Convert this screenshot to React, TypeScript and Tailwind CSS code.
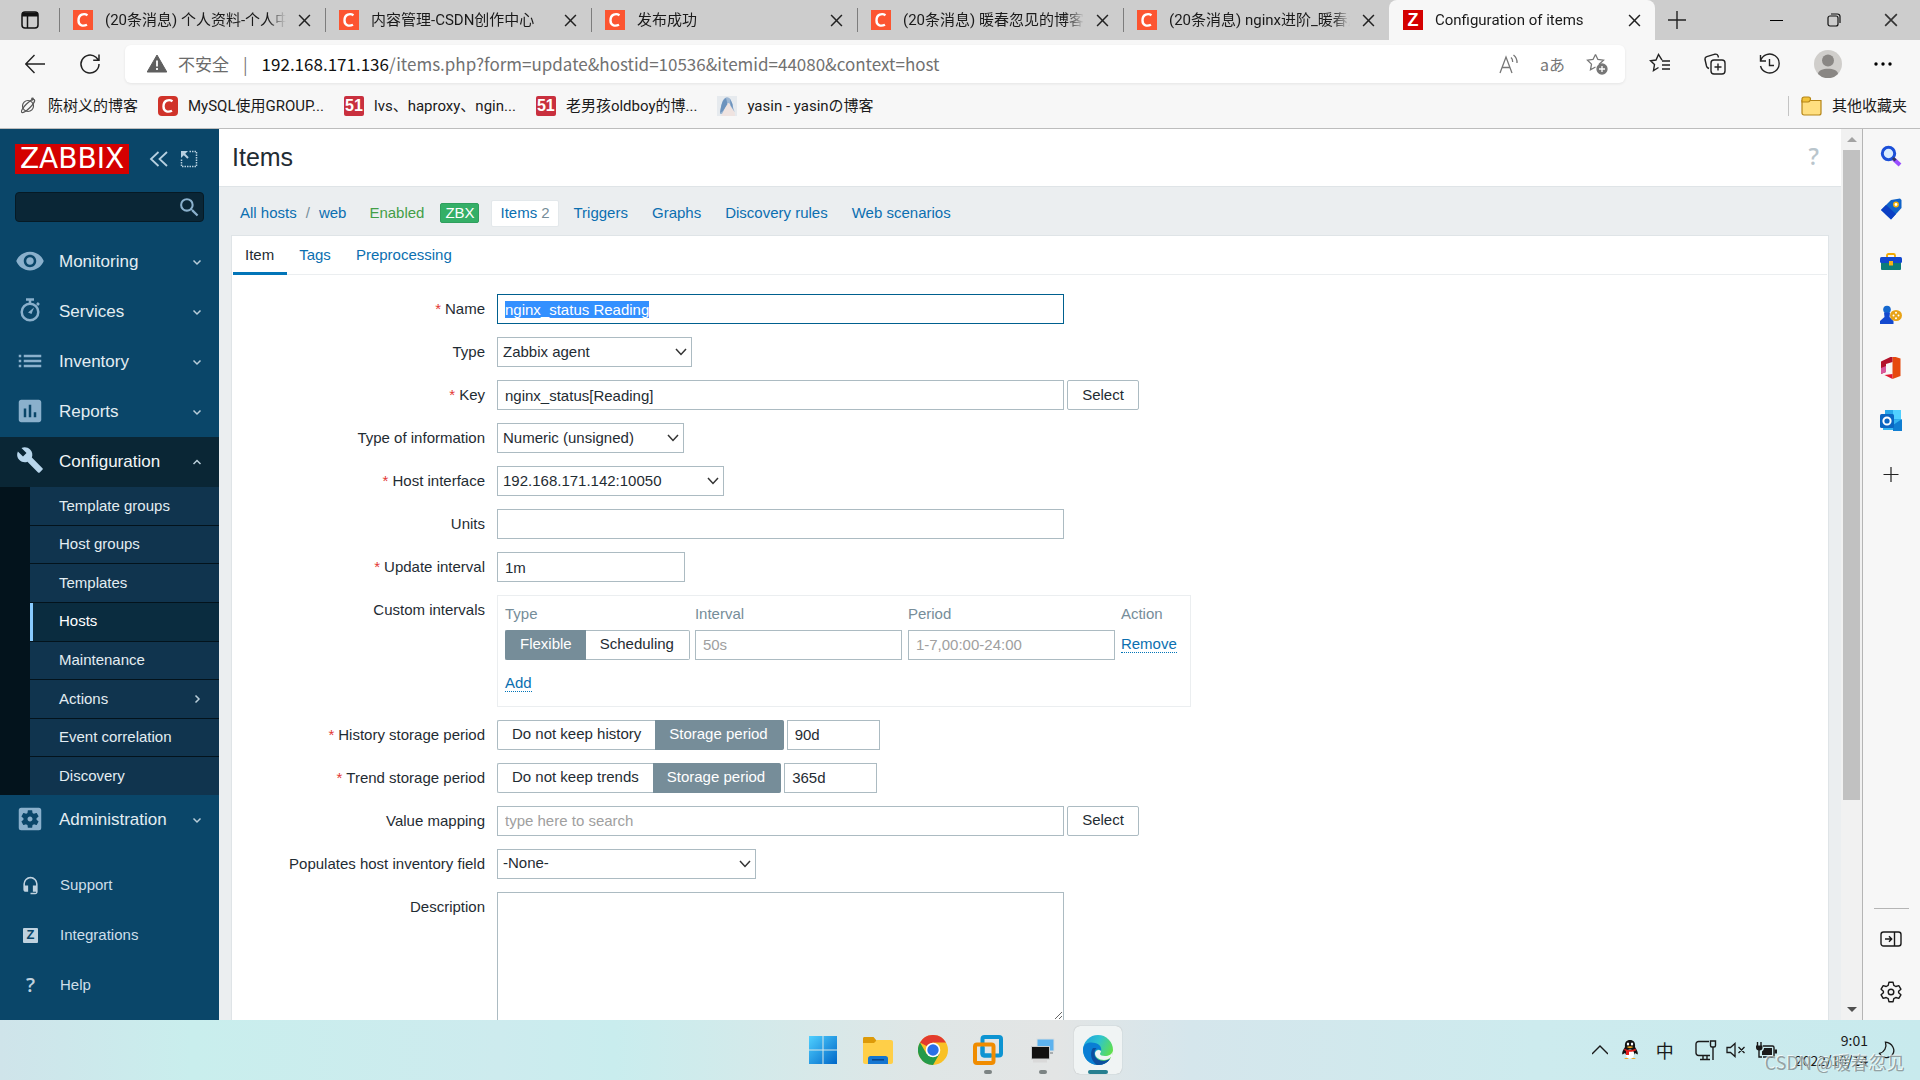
import { useEffect, useRef } from "react";
import type { ReactNode } from "react";
import {
  MdAssessment,
  MdBuild,
  MdHeadsetMic,
  MdList,
  MdSearch,
  MdSettingsApplications,
  MdVisibility,
} from "react-icons/md";

const BROWSER_TABS = [
  { title: "(20条消息) 个人资料-个人中心", active: false },
  { title: "内容管理-CSDN创作中心", active: false },
  { title: "发布成功", active: false },
  { title: "(20条消息) 暖春忽见的博客_暖春", active: false },
  { title: "(20条消息) nginx进阶_暖春忽见", active: false },
  { title: "Configuration of items", active: true },
];

const SUBMENU = [
  "Template groups",
  "Host groups",
  "Templates",
  "Hosts",
  "Maintenance",
  "Actions",
  "Event correlation",
  "Discovery",
];

const HOST_LINKS = ["Triggers", "Graphs", "Discovery rules", "Web scenarios"];

const FIELD =
  "h-[30px] border border-[#acbbc2] bg-white px-[7px] text-[15px] text-[#1f2c33] outline-none placeholder:text-[#a0a0a0]";

/* ---------- browser chrome ---------- */

function CloseIcon({ className }: { className?: string }) {
  return (
    <svg viewBox="0 0 12 12" className={className} fill="none" stroke="currentColor">
      <path d="M1 1l10 10M11 1L1 11" strokeWidth="1.4" />
    </svg>
  );
}

function CsdnIcon({ className }: { className: string }) {
  return (
    <svg viewBox="0 0 20 20" className={className}>
      <path d="M14.5 5.2C11 3 5.5 4.200 5.500 10.500c0 5.500 5 6 8.500 4.200" fill="none" stroke="#fff" strokeWidth="2.400" />
    </svg>
  );
}

function TabStrip() {
  return (
    <div className="flex h-10 shrink-0 items-stretch bg-[#cdcdcd]">
      <button aria-label="Tab actions" className="flex w-[59px] items-center pl-5">
        <svg viewBox="0 0 20 20" className="h-5 w-5" fill="none" stroke="#111" strokeWidth="1.5">
          <rect x="2" y="2" width="16" height="16" rx="3" />
          <path d="M2 4.500h16" strokeWidth="4" />
          <path d="M7.500 6v12" />
        </svg>
      </button>
      {BROWSER_TABS.map((tab) => (
        <div
          key={tab.title}
          className={
            tab.active
              ? "flex w-[266px] items-center rounded-t-lg bg-[#f7f7f7] pr-[11px] pl-[14px]"
              : "flex w-[266px] items-center pr-[11px]"
          }
        >
          {!tab.active && <span className="mr-[13px] h-6 w-px bg-[#7d7d7d]" />}
          {tab.active ? (
            <span className="flex h-5 w-5 items-center justify-center bg-[#d40000] font-['Liberation_Sans',sans-serif] text-[18px] font-bold text-white">
              Z
            </span>
          ) : (
            <CsdnIcon className="h-5 w-5 bg-[#fc5531]" />
          )}
          <span className="ml-3 flex-1 overflow-hidden font-[Roboto,'Noto_Sans_CJK_SC',sans-serif] text-[15px] leading-5 whitespace-nowrap text-[#1a1a1a] [mask-image:linear-gradient(to_right,black_90%,transparent)]">
            {tab.title}
          </span>
          <button aria-label="Close tab" className="ml-2 flex w-5 justify-center text-[#222]">
            <CloseIcon className="h-[13px] w-[13px]" />
          </button>
        </div>
      ))}
      <button aria-label="New tab" className="flex w-11 items-center justify-center">
        <svg viewBox="0 0 18 18" className="h-[18px] w-[18px]" stroke="#222" strokeWidth="1.4">
          <path d="M9 0v18M0 9h18" />
        </svg>
      </button>
      <div className="ml-auto flex">
        <button aria-label="Minimize" className="flex w-[58px] items-center justify-center">
          <span className="h-px w-[13px] bg-black" />
        </button>
        <button aria-label="Restore" className="flex w-[57px] items-center justify-center">
          <svg viewBox="0 0 14 14" className="h-[14px] w-[14px]" fill="none" stroke="#111" strokeWidth="1.2">
            <rect x="1" y="3" width="10" height="10" rx="2" />
            <path d="M4 1h6.500A2.500 2.500 0 0 1 13 3.500V10" />
          </svg>
        </button>
        <button aria-label="Close window" className="flex w-[58px] items-center justify-center text-[#333]">
          <CloseIcon className="h-[14px] w-[14px]" />
        </button>
      </div>
    </div>
  );
}

function StarPath() {
  return <path d="M9.500 1.500l2.400 5 5.600.7-4.100 3.800.3 1.500M9.500 1.500L7 6.500l-5.500.7 4 3.900-1 5.600 5-2.700" />;
}

function AddressBar() {
  return (
    <div className="flex h-[48px] shrink-0 items-center bg-[#f7f7f7]">
      <button aria-label="Back" className="flex w-[70px] items-center justify-center">
        <svg viewBox="0 0 20 20" className="h-5 w-5" fill="none" stroke="#222" strokeWidth="1.400">
          <path d="M20 10H1M9.500 1L.8 10l8.700 9" />
        </svg>
      </button>
      <button aria-label="Refresh" className="flex w-[40px] items-center justify-center">
        <svg viewBox="0 0 22 22" className="h-[22px] w-[22px]" fill="none" stroke="#222" strokeWidth="1.500">
          <path d="M20 11a9 9 0 1 1-3-6.700L19.500 7M20 1.500V7.200h-5.800" />
        </svg>
      </button>
      <div className="ml-[15px] flex h-[38px] flex-1 items-center rounded-md bg-white pr-[17px] pb-px pl-[22px] shadow-[0_1px_3px_rgba(0,0,0,0.08)]">
        <svg viewBox="0 0 20 18" className="h-[19px] w-5">
          <path d="M10 0.500L19.800 17.500H.2z" fill="#5f5f5f" stroke="#5f5f5f" strokeLinejoin="round" />
          <path d="M10 6v6M10 13.500v2" stroke="#fff" strokeWidth="1.800" />
        </svg>
        <span className="ml-[11px] text-[17px] leading-6 text-[#6b6b6b]">不安全</span>
        <span className="mx-[14px] text-[17px] leading-6 text-[#777]">|</span>
        <span className="text-[17px] leading-6 whitespace-nowrap text-[#717171]">
          <span className="text-[#111]">192.168.171.136</span>
          /items.php?form=update&amp;hostid=10536&amp;itemid=44080&amp;context=host
        </span>
        <div className="ml-auto flex items-center gap-[21px] text-[#767676]">
          <button aria-label="Read aloud">
            <svg viewBox="0 0 20 20" className="h-5 w-5" fill="none" stroke="currentColor" strokeWidth="1.300">
              <path d="M1 19L7 3l6 16M3.200 13.500h7.600M12 3.500c1.200 1 1.700 2.500 1.700 4.500M14.500 1c2.500 2 3.700 4.800 3.500 8" />
            </svg>
          </button>
          <button aria-label="Translate" className="text-[16px] leading-5">
            aあ
          </button>
          <button aria-label="Add to favorites">
            <svg viewBox="0 0 22 22" className="h-[22px] w-[22px]" fill="none" stroke="currentColor" strokeWidth="1.300">
              <StarPath />
              <circle cx="16" cy="16" r="5" fill="currentColor" />
              <path d="M16 13v6M13 16h6" stroke="#fff" />
            </svg>
          </button>
        </div>
      </div>
      <div className="flex items-center pr-[5px] text-[#222]">
        <button aria-label="Favorites" className="flex w-[70px] justify-center">
          <svg viewBox="0 0 22 22" className="h-[22px] w-[22px]" fill="none" stroke="currentColor" strokeWidth="1.400">
            <path d="M13 7.200L9.500 1.500 7 7l-5.500.7 4 3.900-1 5.900 5-3M13 8h8M13 12h8M13 16h8" />
          </svg>
        </button>
        <button aria-label="Collections" className="flex w-[40px] justify-center">
          <svg viewBox="0 0 22 22" className="h-[22px] w-[22px]" fill="none" stroke="currentColor" strokeWidth="1.400">
            <path d="M5 15.500l-1-.5C3 14.500 2.800 14 2.500 13L1 6.500C.8 5 1.500 4 2.800 3.600L11 1.200c1.500-.3 2.500.2 3 1.600l.5 1.700" />
            <rect x="7" y="7" width="14" height="14" rx="3" />
            <path d="M14 10.500v7M10.500 14h7" />
          </svg>
        </button>
        <button aria-label="History" className="flex w-[69px] justify-center">
          <svg viewBox="0 0 22 22" className="h-[22px] w-[22px]" fill="none" stroke="currentColor" strokeWidth="1.400">
            <path d="M1.500 8A9.500 9.500 0 1 1 1.500 13M1.500 2v6H7M10.500 6v6.500H15" />
          </svg>
        </button>
        <button aria-label="Profile" className="flex w-[47px] justify-center">
          <svg viewBox="0 0 28 28" className="h-7 w-7">
            <circle cx="14" cy="14" r="14" fill="#d0cecb" />
            <circle cx="14" cy="10.500" r="6" fill="#8a8784" />
            <path d="M4 24c0-7 20-7 20 0a14 14 0 0 1-20 0z" fill="#8a8784" />
          </svg>
        </button>
        <button aria-label="Settings and more" className="flex w-[64px] justify-center">
          <svg viewBox="0 0 18 4" className="h-1 w-[18px]">
            <circle cx="2" cy="2" r="1.700" />
            <circle cx="9" cy="2" r="1.700" />
            <circle cx="16" cy="2" r="1.700" />
          </svg>
        </button>
      </div>
    </div>
  );
}

function Bookmark({ icon, label, href = "#" }: { icon: ReactNode; label: string; href?: string }) {
  return (
    <a
      href={href}
      className="flex items-center gap-[10px] font-[Roboto,'Noto_Sans_CJK_SC',sans-serif] text-[15px] leading-5 whitespace-nowrap text-[#1a1a1a]"
    >
      {icon}
      {label}
    </a>
  );
}

function Icon51() {
  return (
    <span className="flex h-5 w-5 items-center justify-center rounded-xs bg-[#c9303e] font-['Liberation_Sans',sans-serif] text-[16px] font-bold text-white">
      51
    </span>
  );
}

function BookmarksBar() {
  return (
    <div className="flex h-[40px] shrink-0 items-center bg-[#f7f7f7] pr-[13px] pb-1 pl-[18px]">
      <div className="flex items-center gap-5">
        <Bookmark
          label="陈树义的博客"
          icon={
            <svg viewBox="0 0 20 20" className="h-5 w-5" fill="none" stroke="#555" strokeWidth="1.200">
              <circle cx="10" cy="10" r="5.500" />
              <ellipse cx="10" cy="10" rx="9" ry="2.500" transform="rotate(-45 10 10)" />
              <circle cx="14.500" cy="3" r=".8" />
            </svg>
          }
        />
        <Bookmark label="MySQL使用GROUP..." icon={<CsdnIcon className="h-5 w-5 rounded-sm bg-[#d0332a]" />} />
        <Bookmark label="lvs、haproxy、ngin..." icon={<Icon51 />} />
        <Bookmark label="老男孩oldboy的博..." icon={<Icon51 />} />
        <Bookmark
          label="yasin - yasinの博客"
          icon={
            <svg viewBox="0 0 20 20" className="h-5 w-5">
              <rect width="20" height="20" fill="#e6eaee" />
              <path d="M3 18C4 10 5 3 9 1.500c4-1 6 4 6.500 8l2 6-3 2z" fill="#9db7d3" />
              <path d="M10 7c2-.5 3.500.5 3.500 3l4 6 .5 4H4l2-4z" fill="#efe3e0" />
              <path d="M9 2l1.500 6L6 15l-3 2C4 10 5 4 9 2z" fill="#6d93bd" />
              <path d="M13 3l2.500 5 .5 5-2.500-4z" fill="#6d93bd" />
            </svg>
          }
        />
      </div>
      <div className="ml-auto flex items-center gap-3">
        <span className="h-5 w-px bg-[#c4c4c4]" />
        <Bookmark
          label="其他收藏夹"
          icon={
            <svg viewBox="0 0 21 20" className="h-5 w-[21px]" stroke="#b58517" strokeWidth="1.200">
              <path d="M1 4.500h19V17a2 2 0 0 1-2 2H3a2 2 0 0 1-2-2z" fill="#ffdf80" />
              <path d="M1 6V3a2 2 0 0 1 2-2h4.500c1.500 0 2 1 2 2S8.500 6 7 6z" fill="#f2c33a" />
            </svg>
          }
        />
      </div>
    </div>
  );
}

/* ---------- Zabbix sidebar ---------- */

function Chevron({ className, up }: { className?: string; up?: boolean }) {
  return (
    <svg viewBox="0 0 10 10" className={className} fill="none" stroke="currentColor" strokeWidth="1.500">
      <path d={up ? "M1.500 7L5 3.500 8.500 7" : "M1.500 3.500L5 7l3.500-3.500"} />
    </svg>
  );
}

function StopwatchIcon({ className }: { className?: string }) {
  return (
    <svg viewBox="0 0 30 30" className={className} fill="none" stroke="currentColor" strokeWidth="2.500">
      <circle cx="15" cy="16" r="8.300" />
      <path d="M11 3.500h8M15 4v4M22 7l2 2" />
      <path d="M19 11.500l-2.500 6.500-3.500-1.500z" fill="currentColor" stroke="none" />
    </svg>
  );
}

const MENU = [
  { label: "Monitoring", Icon: MdVisibility },
  { label: "Services", Icon: StopwatchIcon },
  { label: "Inventory", Icon: MdList },
  { label: "Reports", Icon: MdAssessment },
];

type MenuItemProps = {
  label: string;
  Icon: (props: { className?: string }) => ReactNode;
  open?: boolean;
};

function MenuItem({ label, Icon, open }: MenuItemProps) {
  return (
    <a
      href="#"
      className={
        open
          ? "flex h-[50px] items-center bg-[#0a2635] pr-[17px] pl-[15px] text-[#f2f6f8]"
          : "flex h-[50px] items-center pr-[17px] pl-[15px] text-[#e3edf2]"
      }
    >
      <Icon className={open ? "mb-1 h-[28px] w-[30px] text-[#b8d6ec]" : "mb-[2px] h-[30px] w-[30px] text-[#8ab0cc]"} />
      <span className="ml-[14px] flex-1 text-[17px]">{label}</span>
      <Chevron up={open} className="h-[10px] w-[10px] text-[#b9cdd9]" />
    </a>
  );
}

function Sidebar() {
  return (
    <aside className="flex w-[219px] shrink-0 flex-col overflow-hidden bg-[#0a4669]">
      <div className="flex items-center pt-[15px] pl-[15px]">
        <a
          href="#"
          className="flex h-[30px] w-[114px] items-center justify-center bg-[#d40000] font-['DejaVu_Sans',sans-serif] text-[28px] leading-[30px] text-white"
        >
          ZABBIX
        </a>
        <button aria-label="Hide sidebar" className="ml-5 text-[#b7d0e0]">
          <svg viewBox="0 0 20 16" className="h-4 w-5" fill="none" stroke="currentColor" strokeWidth="1.800">
            <path d="M9.500 1L2 8l7.500 7M18 1l-7.500 7 7.500 7" />
          </svg>
        </button>
        <button aria-label="Kiosk mode" className="ml-[11px] text-[#b7d0e0]">
          <svg viewBox="0 0 18 18" className="h-[18px] w-[18px]" fill="none" stroke="currentColor">
            <path d="M9.500 1.500h7v15h-15V9" strokeWidth="1.500" strokeDasharray="1.500 1" />
            <path d="M1 1h7L1 8z" fill="currentColor" stroke="none" />
            <path d="M3 3l5 5" strokeWidth="2" />
          </svg>
        </button>
      </div>
      <div className="mx-[15px] mt-[18px] flex h-[30px] items-center rounded-sm border border-[#061a25] bg-[#0a2636] pr-px">
        <input type="search" aria-label="Search" className="h-full min-w-0 flex-1 bg-transparent px-2 text-[15px] text-white outline-none" />
        <button aria-label="Submit search" className="text-[#8ab0cc]">
          <MdSearch className="h-[25px] w-[25px]" />
        </button>
      </div>
      <nav className="mt-[15px]">
        {MENU.map((item) => (
          <MenuItem key={item.label} label={item.label} Icon={item.Icon} />
        ))}
        <MenuItem label="Configuration" Icon={MdBuild} open />
        <ul className="grid h-[308px] grid-rows-8 gap-px bg-[#03131c] pl-[30px]">
          {SUBMENU.map((label) => (
            <li key={label} className="flex">
              <a
                href="#"
                className={
                  label === "Hosts"
                    ? "flex flex-1 items-center border-l-[3px] border-[#88cbff] bg-[#0a2c3f] pr-[17px] pl-[26px] text-[15px] text-white"
                    : "flex flex-1 items-center bg-[#10344e] pr-[17px] pl-[29px] text-[15px] text-[#e3edf2]"
                }
              >
                {label}
                {label === "Actions" && (
                  <svg viewBox="0 0 10 10" className="ml-auto h-[10px] w-[10px]" fill="none" stroke="#b9cdd9" strokeWidth="1.500">
                    <path d="M3.500 1.500L7 5 3.500 8.500" />
                  </svg>
                )}
              </a>
            </li>
          ))}
        </ul>
        <MenuItem label="Administration" Icon={MdSettingsApplications} />
      </nav>
      <nav className="mt-[15px] text-[15px] text-[#cfdfe9]">
        <a href="#" className="flex h-[50px] items-center pl-[21px]">
          <MdHeadsetMic className="h-[19px] w-[19px] text-[#c0d2df]" />
          <span className="ml-5">Support</span>
        </a>
        <a href="#" className="flex h-[50px] items-center pl-[23px]">
          <span className="flex h-[15px] w-[15px] items-center justify-center rounded-[1px] bg-[#c0d2df] text-[13px] font-bold text-[#0a4669]">
            Z
          </span>
          <span className="ml-[22px]">Integrations</span>
        </a>
        <a href="#" className="flex h-[50px] items-center pl-[23px]">
          <span className="w-[15px] text-center font-['Open_Sans',sans-serif] text-[20px] font-semibold text-[#c0d2df]">?</span>
          <span className="ml-[22px]">Help</span>
        </a>
      </nav>
    </aside>
  );
}

/* ---------- item form ---------- */

function Row({ label, htmlFor, required, children }: { label: string; htmlFor?: string; required?: boolean; children: ReactNode }) {
  return (
    <div className="flex items-start gap-3">
      <label htmlFor={htmlFor} className="w-[253px] shrink-0 text-right leading-[30px] text-[#1f2c33]">
        {required && <span className="mr-1 text-[#e33734]">*</span>}
        {label}
      </label>
      <div className="flex items-start gap-[3px]">{children}</div>
    </div>
  );
}

function Select({ id, value, width }: { id: string; value: string; width: string }) {
  return (
    <div className={`grid items-center ${width}`}>
      <select
        id={id}
        defaultValue={value}
        className="col-start-1 row-start-1 h-[30px] appearance-none border border-[#acbbc2] bg-white pl-[5px] text-[15px] text-[#1f2c33] outline-none"
      >
        <option>{value}</option>
      </select>
      <svg
        viewBox="0 0 12 8"
        className="pointer-events-none col-start-1 row-start-1 mr-[5px] h-2 w-3 justify-self-end"
        fill="none"
        stroke="#333"
        strokeWidth="1.500"
      >
        <path d="M1 1l5 5.500L11 1" />
      </svg>
    </div>
  );
}

function Segmented({ name, options, selected }: { name: string; options: string[]; selected: string }) {
  return (
    <fieldset className="flex">
      {options.map((option) => (
        <label key={option} className="group relative flex">
          <input type="radio" name={name} defaultChecked={option === selected} className="peer sr-only" />
          <span className="flex h-[30px] items-center border-y border-[#acbbc2] px-[14px] text-[#1f2c33] group-first:rounded-l-xs group-first:border-l group-last:rounded-r-xs group-last:border-r group-last:pr-[15px] peer-checked:border-[#768d99] peer-checked:bg-[#768d99] peer-checked:text-white">
            {option}
          </span>
        </label>
      ))}
    </fieldset>
  );
}

function SelectButton() {
  return (
    <button type="button" className="h-[30px] w-[72px] rounded-xs border border-[#acbbc2] bg-white text-[#1f2c33]">
      Select
    </button>
  );
}

function DottedLink({ children }: { children: ReactNode }) {
  return (
    <a href="#" className="border-b border-dotted border-[#0275b8] leading-4 text-[#0b6fb0]">
      {children}
    </a>
  );
}

function ItemForm() {
  const nameRef = useRef<HTMLInputElement>(null);

  useEffect(() => {
    nameRef.current?.focus();
    nameRef.current?.select();
  }, []);

  return (
    <form className="flex flex-col gap-[13px] pt-[19px]" onSubmit={(e) => e.preventDefault()}>
      <Row label="Name" htmlFor="name" required>
        <input
          id="name"
          ref={nameRef}
          defaultValue="nginx_status Reading"
          className="h-[30px] w-[567px] border border-[#00608f] bg-white px-[7px] text-[15px] text-[#1f2c33] outline-none selection:bg-[#3390ff] selection:text-white"
        />
      </Row>
      <Row label="Type" htmlFor="type">
        <Select id="type" value="Zabbix agent" width="w-[195px]" />
      </Row>
      <Row label="Key" htmlFor="key" required>
        <input id="key" defaultValue="nginx_status[Reading]" className={`${FIELD} w-[567px]`} />
        <SelectButton />
      </Row>
      <Row label="Type of information" htmlFor="value_type">
        <Select id="value_type" value="Numeric (unsigned)" width="w-[187px]" />
      </Row>
      <Row label="Host interface" htmlFor="interface" required>
        <Select id="interface" value="192.168.171.142:10050" width="w-[227px]" />
      </Row>
      <Row label="Units" htmlFor="units">
        <input id="units" className={`${FIELD} w-[567px]`} />
      </Row>
      <Row label="Update interval" htmlFor="delay" required>
        <input id="delay" defaultValue="1m" className={`${FIELD} w-[188px]`} />
      </Row>
      <Row label="Custom intervals">
        <div className="border border-[#ebeef0] px-[7px] pt-[7px] pb-3">
          <table className="border-collapse text-left">
            <thead>
              <tr className="h-[22px] text-[#768d99]">
                <th className="font-normal">Type</th>
                <th className="font-normal">Interval</th>
                <th className="font-normal">Period</th>
                <th className="font-normal">Action</th>
              </tr>
            </thead>
            <tbody>
              <tr className="h-[38px]">
                <td className="pr-[5px]">
                  <Segmented name="delay_flex" options={["Flexible", "Scheduling"]} selected="Flexible" />
                </td>
                <td className="pr-[6px]">
                  <input aria-label="Interval" placeholder="50s" className={`${FIELD} block w-[207px]`} />
                </td>
                <td className="pr-[6px]">
                  <input aria-label="Period" placeholder="1-7,00:00-24:00" className={`${FIELD} block w-[207px]`} />
                </td>
                <td className="pr-[6px]">
                  <DottedLink>Remove</DottedLink>
                </td>
              </tr>
              <tr>
                <td colSpan={4} className="pt-2 leading-[22px]">
                  <DottedLink>Add</DottedLink>
                </td>
              </tr>
            </tbody>
          </table>
        </div>
      </Row>
      <Row label="History storage period" htmlFor="history" required>
        <Segmented name="history_mode" options={["Do not keep history", "Storage period"]} selected="Storage period" />
        <input id="history" defaultValue="90d" className={`${FIELD} w-[93px]`} />
      </Row>
      <Row label="Trend storage period" htmlFor="trends" required>
        <Segmented name="trends_mode" options={["Do not keep trends", "Storage period"]} selected="Storage period" />
        <input id="trends" defaultValue="365d" className={`${FIELD} w-[93px]`} />
      </Row>
      <Row label="Value mapping" htmlFor="valuemap">
        <input id="valuemap" placeholder="type here to search" className={`${FIELD} w-[567px]`} />
        <SelectButton />
      </Row>
      <Row label="Populates host inventory field" htmlFor="inventory">
        <Select id="inventory" value="-None-" width="w-[259px]" />
      </Row>
      <Row label="Description" htmlFor="description">
        <textarea id="description" className="h-[129px] w-[567px] resize border border-[#acbbc2] bg-white outline-none" />
      </Row>
    </form>
  );
}

function Content() {
  return (
    <main className="flex min-w-0 flex-1 flex-col overflow-hidden bg-[#ebeef0] text-[15px]">
      <header className="flex h-[58px] shrink-0 items-center justify-between border-b border-[#dfe4e7] bg-white pr-[22px] pl-[13px]">
        <h1 className="pt-px text-[25px] text-[#1f2c33]">Items</h1>
        <a href="#" aria-label="Help" className="pb-[2px] font-['Open_Sans',sans-serif] text-[23px] font-semibold text-[#b9c5cc]">
          ?
        </a>
      </header>
      <nav className="flex h-[48px] shrink-0 items-center pt-1 pl-[21px] text-[#0b6fb0]">
        <a href="#">All hosts</a>
        <span className="mx-[9px] text-[#768d99]">/</span>
        <a href="#">web</a>
        <span className="ml-[23px] text-[#429e47]">Enabled</span>
        <span className="ml-4 flex h-5 w-[39px] items-center justify-center rounded-xs border border-[#2f9f5e] bg-[#34af67] text-white">
          ZBX
        </span>
        <a href="#" className="mr-[15px] ml-3 flex h-[27px] items-center rounded-xs border border-[#e3e8eb] bg-white px-2">
          Items <span className="ml-1 text-[#768d99]">2</span>
        </a>
        <div className="flex gap-6">
          {HOST_LINKS.map((link) => (
            <a key={link} href="#">
              {link}
            </a>
          ))}
        </div>
      </nav>
      <section className="mr-3 ml-3 flex-1 overflow-hidden border border-b-0 border-[#dfe4e7] bg-white">
        <div role="tablist" className="mx-px flex h-[39px] border-b border-[#ebeef0]">
          <button role="tab" aria-selected="true" className="-mb-px border-b-[3px] border-[#0275b8] pt-[2px] pr-[13px] pl-3 text-[#1f2c33]">
            Item
          </button>
          <button role="tab" aria-selected="false" className="pr-[13px] pl-3 text-[#0b6fb0]">
            Tags
          </button>
          <button role="tab" aria-selected="false" className="pr-[13px] pl-3 text-[#0b6fb0]">
            Preprocessing
          </button>
        </div>
        <ItemForm />
      </section>
    </main>
  );
}

function ScrollBar() {
  return (
    <div className="flex w-[21px] shrink-0 flex-col items-center bg-[#f1f1f1]">
      <svg viewBox="0 0 10 5" className="my-2 h-[5px] w-[10px] shrink-0">
        <path d="M0 5l5-5 5 5z" fill="#a3a3a3" />
      </svg>
      <div className="h-[73%] w-[17px] bg-[#c1c1c1]" />
      <svg viewBox="0 0 10 5" className="mt-auto mb-2 h-[5px] w-[10px] shrink-0">
        <path d="M0 0l5 5 5-5z" fill="#505050" />
      </svg>
    </div>
  );
}

/* ---------- Edge side rail ---------- */

function RailButton({ label, children }: { label: string; children: ReactNode }) {
  return (
    <button aria-label={label} className="flex h-[53px] w-full items-center justify-center pr-[2px]">
      <svg viewBox="0 0 22 22" className="h-[22px] w-[22px]" fill="none">
        {children}
      </svg>
    </button>
  );
}

function EdgeRail() {
  return (
    <aside className="flex w-[58px] shrink-0 flex-col items-center border-l border-[#b5b5b5] bg-[#f7f7f7] pb-[2px]">
      <RailButton label="Search">
        <path d="M13.500 14l6.500 6" stroke="#9a4dff" strokeWidth="4" />
        <circle cx="8.500" cy="8.500" r="6.200" stroke="#1b4fd8" strokeWidth="3" fill="#d9ecff" />
        <path d="M13 13l2.500 2.500" stroke="#333a60" strokeWidth="3" />
      </RailButton>
      <RailButton label="Shopping">
        <path d="M1 12L11 2l9-1.500L21.500 2v8L11 21.500z" fill="#1063c8" />
        <path d="M1 12l5-5 10 9-5 5.500z" fill="#0b3fc4" />
        <circle cx="16" cy="6.500" r="2.200" fill="#fff" stroke="#f5b400" strokeWidth="1.500" />
      </RailButton>
      <RailButton label="Tools">
        <path d="M7 6V4.500C7 3.500 7.500 3 8.500 3h5c1 0 1.500.5 1.500 1.500V6" stroke="#f2a900" strokeWidth="1.800" />
        <rect x="1" y="9" width="20" height="10" rx="1" fill="#0d7c79" />
        <rect x="0" y="6" width="22" height="6" rx="1.500" fill="#1247cf" />
        <rect x="9" y="10" width="4" height="4.500" fill="#f6b21a" />
      </RailButton>
      <RailButton label="Games">
        <circle cx="7" cy="5.500" r="3.800" fill="#1468cf" />
        <path d="M4 8.500h6L9.500 13l4 4v3H0v-3l4.500-4z" fill="#1349cf" />
        <ellipse cx="16" cy="11.500" rx="6" ry="5.500" fill="#e8a317" />
        <g fill="#fff">
          <circle cx="16" cy="8.800" r="1" />
          <circle cx="13.500" cy="11.500" r="1" />
          <circle cx="18.500" cy="11.500" r="1" />
          <circle cx="16" cy="14.200" r="1" />
        </g>
      </RailButton>
      <RailButton label="Office">
        <path d="M12.500-1L20.500 1.500v17.500L12.500 22z" fill="#e64a0e" />
        <path d="M12.500-1v6L6 7v8l-5 2V4.500z" fill="#b3122b" />
        <path d="M1 11l5-2v6l-5 2z" fill="#d9579b" />
        <path d="M4.500 18L12.500 17v5z" fill="#e0162f" />
      </RailButton>
      <RailButton label="Outlook">
        <rect x="5" y="0" width="16" height="19" fill="#28a8ea" />
        <path d="M13 0h8v9h-8z" fill="#50d0ff" />
        <path d="M3 20V12l18-3v11z" fill="#35b5f0" />
        <path d="M13 15l9-6v12H13z" fill="#0f7ed2" />
        <rect x="0" y="4" width="14" height="14" rx="1.500" fill="#0a66c2" />
        <circle cx="7" cy="11" r="3.600" stroke="#fff" strokeWidth="2" />
      </RailButton>
      <RailButton label="Customize">
        <path d="M11 4v15M3.500 11.500h15" stroke="#222" strokeWidth="1.200" />
      </RailButton>
      <span className="mt-auto mb-[3px] h-px w-[35px] bg-[#b5b5b5]" />
      <RailButton label="Hide sidebar">
        <g stroke="#1a1a1a" strokeWidth="1.400">
          <rect x="1" y="4" width="20" height="14" rx="2.500" />
          <path d="M14.500 4v14M5 11h6.500M9 8.300l2.700 2.700L9 13.700" />
        </g>
      </RailButton>
      <RailButton label="Settings">
        <g stroke="#1a1a1a" strokeWidth="1.400" strokeLinejoin="round">
          <path d="M8.900 1.300h4.200l.7 3 2 1.200 3-.9 2.100 3.600-2.300 2.100v1.400l2.300 2.100-2.100 3.600-3-.9-2 1.200-.7 3H8.900l-.7-3-2-1.200-3 .9-2.100-3.600 2.300-2.100v-1.400L1.100 8.200l2.100-3.600 3 .9 2-1.200z" />
          <circle cx="11" cy="11" r="2.800" />
        </g>
      </RailButton>
    </aside>
  );
}

/* ---------- taskbar ---------- */

function TaskIcon({ label, running, children }: { label: string; running?: boolean; children: ReactNode }) {
  return (
    <button aria-label={label} className="flex w-[55px] flex-col items-center pt-[15px]">
      <svg viewBox="0 0 30 30" className="h-[30px] w-[30px]" fill="none">
        {children}
      </svg>
      {running && <span className="mt-[5px] h-1 w-2 rounded-full bg-[#7c8484]" />}
    </button>
  );
}

function Taskbar() {
  return (
    <footer className="relative grid h-[60px] shrink-0 grid-cols-[1fr_auto_1fr] bg-[linear-gradient(90deg,#cfe4ea_0%,#c9eeed_10%,#cdebee_26%,#c9edee_32%,#dfe6e6_48%,#e3e5e5_55%,#d5e6ec_62%,#cdebee_80%,#c8eaed_100%)]">
      <div className="col-start-2 flex">
        <TaskIcon label="Start">
          <defs>
            <linearGradient id="win" x1="0" y1="0" x2="1" y2="1">
              <stop offset="0" stopColor="#4fd0ff" />
              <stop offset="1" stopColor="#0067c8" />
            </linearGradient>
          </defs>
          <path d="M1 1h13.500v13.500H1zM15.500 1H29v13.500H15.500zM1 15.500h13.500V29H1zM15.500 15.500H29V29H15.500z" fill="url(#win)" />
        </TaskIcon>
        <TaskIcon label="File Explorer">
          <path d="M0 3.500C0 2.500.5 2 1.500 2h9l3 3.500V9H0z" fill="#dd9a09" />
          <path d="M0 8h11l3-3h14c1 0 2 .7 2 2v20c0 1-1 2-2 2H2c-1 0-2-1-2-2z" fill="#ffcf48" />
          <path d="M5 29v-5.500c0-1.500 1-2.500 2.500-2.500h15c1.500 0 2.500 1 2.500 2.500V29z" fill="#1576d1" />
          <path d="M9 24.800h12" stroke="#0a4488" strokeWidth="1.500" />
        </TaskIcon>
        <TaskIcon label="Chrome">
          <circle cx="15" cy="15" r="15" fill="#f9c126" />
          <path d="M2 7.500A15 15 0 0 1 28 7.500H15L8.500 11z" fill="#e33b2e" />
          <path d="M2 7.500A15 15 0 0 0 15 30l6.500-11.200L8.500 18.800z" fill="#249a4a" />
          <circle cx="15" cy="15" r="7.300" fill="#fff" />
          <circle cx="15" cy="15" r="5.700" fill="#2a6fe8" />
        </TaskIcon>
        <TaskIcon label="VMware" running>
          <rect x="9.500" y="2" width="18.500" height="18.500" rx="2" stroke="#0d94d2" strokeWidth="4" />
          <rect x="2" y="9.500" width="18.500" height="18.500" rx="2" stroke="#f08c00" strokeWidth="4" />
          <path d="M9.500 12v6.500c0 1.200.8 2 2 2H18" stroke="#0d94d2" strokeWidth="4" />
        </TaskIcon>
        <TaskIcon label="Xshell" running>
          <rect x="9" y="4" width="17" height="12" fill="#5db2ee" stroke="#d8dde0" />
          <path d="M14 18h11" stroke="#a8adb0" strokeWidth="2" />
          <rect x="3.500" y="11.500" width="18" height="12.500" fill="#111" stroke="#c8cccf" />
          <path d="M5 26h14" stroke="#d9d9d9" strokeWidth="3" />
        </TaskIcon>
        <div className="flex w-[55px] justify-center py-[6px]">
          <button aria-label="Microsoft Edge" className="flex w-[48px] flex-col items-center rounded-md bg-[#f0f4f4] pt-[9px] shadow-[0_0_1px_rgba(0,0,0,0.3)]">
            <svg viewBox="0 0 30 30" className="h-[30px] w-[30px]">
              <defs>
                <linearGradient id="edgeTop" x1="0" y1="0" x2="1" y2="0.500">
                  <stop offset="0" stopColor="#1b9fe0" />
                  <stop offset="0.500" stopColor="#2ec4cf" />
                  <stop offset="1" stopColor="#62e04a" />
                </linearGradient>
              </defs>
              <circle cx="15" cy="15" r="15" fill="url(#edgeTop)" />
              <path d="M0 14C1 7 8 7 12 8c5 1 7 5 6 8-3-4-8 0-6 6 2 5 9 6 15 2-3 4-7 6-12 6C6 30 0 23 0 14z" fill="#0a7ed4" />
              <path d="M10 13c-3 4-3 12 4 17 6 .3 10-2 13-6-6 3-12 2-14.500-2-2-3-1-7 1-9z" fill="#0d4f9e" />
              <path d="M18 16c-2-2-5-1-6 2 0 4 4 7 9 7 3 0 6-1.500 7-3l1 3 1-9c-1 3-4 5-8 5-3 0-5-1-5-2 0-1 1-1.500 1-3z" fill="#f0f4f4" />
            </svg>
            <span className="mt-[5px] h-1 w-5 rounded-full bg-[#267f90]" />
          </button>
        </div>
      </div>
      <div className="flex items-center justify-end pr-[24px] text-[#1a1a1a]">
        <svg viewBox="0 0 16 10" className="h-[10px] w-4" fill="none" stroke="currentColor" strokeWidth="1.400">
          <path d="M0 9l8-8 8 8" />
        </svg>
        <svg viewBox="0 0 16 20" className="ml-[14px] h-5 w-4">
          <path d="M8 0C4 0 2.500 3 3 7c-2 3-3.500 6-2.500 7.500L3 13c.5 4 9.500 4 10 0l2.500 1.500C16.500 13 15 10 13 7c.5-4-1-7-5-7z" fill="#111" />
          <ellipse cx="8" cy="14" rx="4.200" ry="4.500" fill="#fff" />
          <path d="M2.500 8.500c3 2 8 2 11 0l.5 2c-2 1-5 1.500-7 1.300V15H4v-4l-1.800-1z" fill="#e21d1d" />
          <ellipse cx="6" cy="4" rx="1.200" ry="1.600" fill="#fff" />
          <ellipse cx="10" cy="4" rx="1.200" ry="1.600" fill="#fff" />
          <path d="M4.500 7c2 1.500 5 1.500 7 0-2-1-5-1-7 0zM2 19c1-1.500 4-1.500 5 0zM9 19c1-1.500 4-1.500 5 0z" fill="#f3a51c" />
        </svg>
        <span className="ml-[18px] text-[18px] leading-5">中</span>
        <svg viewBox="0 0 22 22" className="ml-[21px] h-[22px] w-[22px]" fill="none" stroke="currentColor" strokeWidth="1.400">
          <path d="M14 2.500H3.500A2.500 2.500 0 0 0 1 5v9a2.500 2.500 0 0 0 2.500 2.500H15M5 20.500h10M8 17v3M12 17v3M15.500 2h5v4.500c0 1-.5 1.500-1.500 1.500h-2c-1 0-1.500-.5-1.500-1.500zM18 8v13" />
        </svg>
        <svg viewBox="0 0 20 16" className="ml-[9px] h-4 w-5" fill="none" stroke="currentColor" strokeWidth="1.300">
          <path d="M1 5.500h3.500L9 1.500v13L4.500 10.500H1zM12.500 5l6 6M18.500 5l-6 6" />
        </svg>
        <svg viewBox="0 0 21 16" className="ml-[10px] h-4 w-[21px]" fill="none" stroke="currentColor" strokeWidth="1.400">
          <path d="M7 4h9.500A1.500 1.500 0 0 1 18 5.500v8a1.500 1.500 0 0 1-1.500 1.500H7M3 8v7h3M1.500 0v4M5 0v4" />
          <path d="M0 3.500h6.500v2c0 2-1 3-3.200 3S0 7.500 0 5.500zM8 6h8v7H6V9.500c1.200-.8 2-2 2-3.500zM18.500 7.500H21v4h-2.500z" fill="currentColor" stroke="none" />
        </svg>
        <div className="ml-[18px] flex flex-col text-right text-[14px] leading-5">
          <time>9:01</time>
          <time>2022/10/14</time>
        </div>
        <svg viewBox="0 0 18 18" className="ml-[10px] h-[18px] w-[18px]" fill="none" stroke="currentColor" strokeWidth="1.300">
          <path d="M7.500 1.200c1.500 5-1 10-6 11.300 3 5 10 5.500 13 1C17.800 9 14.500 2 7.500 1.200z" />
        </svg>
      </div>
      <span className="absolute right-[15px] bottom-[6px] text-[18px] leading-6 text-[#8b9798]/90 [text-shadow:-1px_-1px_0_rgba(255,255,255,0.7)]">
        CSDN @暖春忽见
      </span>
    </footer>
  );
}

export default function App() {
  return (
    <div className="flex h-screen flex-col overflow-hidden bg-[#f7f7f7] font-['Noto_Sans_CJK_SC',sans-serif]">
      <TabStrip />
      <AddressBar />
      <BookmarksBar />
      <div className="flex min-h-0 flex-1 border-t border-[#bdbdbd]">
        <div className="flex min-w-0 flex-1 font-['Liberation_Sans',Arial,sans-serif]">
          <Sidebar />
          <Content />
          <ScrollBar />
        </div>
        <EdgeRail />
      </div>
      <Taskbar />
    </div>
  );
}
